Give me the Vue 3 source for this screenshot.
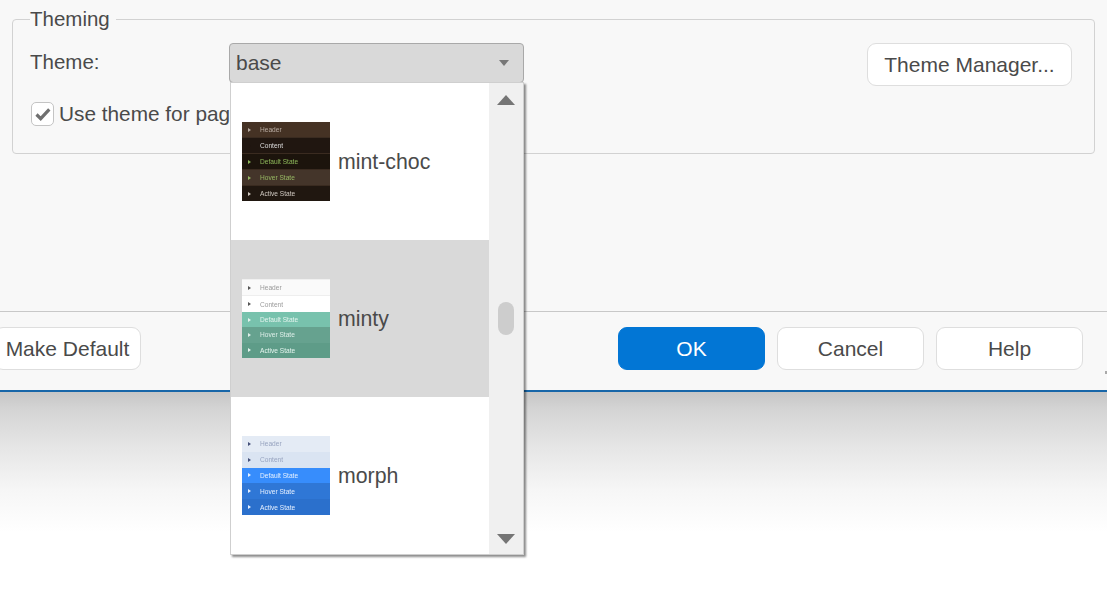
<script setup>
const states = [
  { label: 'Header', key: 'header' },
  { label: 'Content', key: 'content' },
  { label: 'Default State', key: 'default' },
  { label: 'Hover State', key: 'hover' },
  { label: 'Active State', key: 'active' },
]
const themes = [
  { name: 'mint-choc', cls: 'choc' },
  { name: 'minty', cls: 'minty', selected: true },
  { name: 'morph', cls: 'morph' },
]
</script>

<template>
  <div class="page">
    <section class="dialog">
      <div class="body">
        <fieldset class="group">
          <legend>Theming</legend>
          <div class="theme-row">
            <span class="theme-label">Theme:</span>
            <div class="select">
              <span>base</span>
              <svg class="caret" width="10" height="6" viewBox="0 0 10 6"><path d="M0 0h10L5 6z" fill="#777" /></svg>
            </div>
            <button class="btn manager" type="button">Theme Manager...</button>
          </div>
          <label class="check-row">
            <span class="checkbox">
              <svg width="18" height="16" viewBox="0 0 18 16"><path d="M2.5 8.5l4.2 4.2 8.6-9.4" fill="none" stroke="#6f6f6f" stroke-width="3.2" /></svg>
            </span>
            <span>Use theme for pages</span>
          </label>
        </fieldset>
      </div>
      <footer class="footer">
        <button class="btn make" type="button">Make Default</button>
        <div class="actions">
          <button class="btn primary" type="button">OK</button>
          <button class="btn" type="button">Cancel</button>
          <button class="btn" type="button">Help</button>
        </div>
      </footer>
      <i class="grip"></i>
    </section>
    <div class="fade"></div>

    <div class="dropdown">
      <ul class="list">
        <li v-for="t in themes" :key="t.name" class="item" :class="{ selected: t.selected }">
          <div class="thumb" :class="t.cls">
            <div v-for="s in states" :key="s.key" class="row" :class="s.key">
              <i class="tri"></i><span>{{ s.label }}</span>
            </div>
          </div>
          <span class="name">{{ t.name }}</span>
        </li>
      </ul>
      <div class="scrollbar">
        <svg width="18" height="10" viewBox="0 0 18 10"><path d="M9 0L18 10H0z" fill="#757575" /></svg>
        <div class="track"><div class="handle"></div></div>
        <svg width="18" height="10" viewBox="0 0 18 10"><path d="M0 0h18L9 10z" fill="#757575" /></svg>
      </div>
    </div>
  </div>
</template>

<style>
html, body { margin: 0; background: #fff; overflow: hidden; }
</style>

<style scoped>
.page {
  position: relative;
  width: 1107px;
  height: 596px;
  overflow: hidden;
  font-family: "Liberation Sans", Arial, sans-serif;
  font-size: 21px;
  color: #4a4a4a;
}
.dialog {
  position: relative;
  height: 392px;
  box-sizing: border-box;
  background: #f8f8f8;
  border-bottom: 2px solid #1766a8;
  display: flex;
  flex-direction: column;
}
.body { height: 311px; box-sizing: border-box; padding: 7px 12px 0; }
.group {
  box-sizing: border-box;
  width: 1083px;
  height: 147px;
  margin: 0;
  padding: 0 22px 0 17px;
  border: 1px solid #d2d2d2;
  border-radius: 4px;
}
legend { padding: 0 6px 0 0; font-size: 20.5px; line-height: 24px; }
.theme-row { display: flex; align-items: flex-start; margin-top: 12px; }
.theme-label { width: 199px; line-height: 38px; font-size: 20.5px; }
.select {
  box-sizing: border-box;
  width: 295px;
  height: 40px;
  border: 1px solid #a9a9a9;
  border-radius: 4px;
  background: #d9d9d9;
  display: flex;
  align-items: center;
  justify-content: space-between;
  padding: 0 14px 0 6px;
}
.btn {
  box-sizing: border-box;
  width: 147px;
  height: 43px;
  border: 1px solid #dedede;
  border-radius: 9px;
  background: #fff;
  padding: 0;
  font: inherit;
  color: inherit;
}
.manager { width: 205px; margin-left: auto; }
.check-row { display: flex; align-items: center; gap: 5px; margin-top: 15px; height: 26px; margin-left: 1px; font-size: 20.8px; }
.checkbox {
  box-sizing: border-box;
  width: 23px;
  height: 24px;
  border: 1px solid #c4c4c4;
  border-radius: 5px;
  background: #fff;
  display: flex;
  align-items: center;
  justify-content: center;
}
.footer {
  flex: 1;
  border-top: 1px solid #c8c8c8;
  display: flex;
  align-items: flex-start;
  justify-content: space-between;
  padding: 15px 24px 0 0;
  margin-left: -6px;
}
.actions { display: flex; gap: 12px; }
.primary { background: #0276d5; border-color: #0276d5; color: #fff; }
.grip { position: absolute; right: 0; top: 371px; width: 2px; height: 3px; background: #aaa; }
.fade { height: 140px; background: linear-gradient(#c6c6c6, #d4d4d4 12%, #e6e6e6 40%, #f6f6f6 70%, #ffffff); }
.dropdown {
  position: absolute;
  left: 230px;
  top: 82px;
  box-sizing: border-box;
  width: 294px;
  height: 473px;
  background: #fff;
  border: 1px solid #cfcfcf;
  box-shadow: 2px 2px 2px rgba(0, 0, 0, 0.45);
  display: flex;
}
.list { flex: 1; margin: 0; padding: 0; list-style: none; }
.item { height: 157px; display: flex; align-items: center; gap: 8px; padding-left: 11px; }
.item.selected { background: #d9d9d9; }
.name { font-size: 21.3px; padding-top: 2px; }
.thumb { width: 88px; height: 79px; display: flex; flex-direction: column; filter: blur(0.4px); }
.row {
  flex: 1;
  display: flex;
  align-items: center;
  font-size: 6.6px;
  padding-left: 6px;
  gap: 9px;
  white-space: nowrap;
}
.tri {
  width: 0;
  height: 0;
  border-left: 3px solid currentColor;
  border-top: 2px solid transparent;
  border-bottom: 2px solid transparent;
}
.choc .header { background: #453224; color: #b9ada3; }
.choc .content { background: #201610; color: #ddd; border-top: 1px solid #3a2b20; }
.choc .content .tri { color: #201610; }
.choc .default { background: #1c140c; color: #8db85a; border-top: 1px solid #3a2b20; }
.choc .hover { background: #44352a; color: #97b863; border-top: 1px solid #3a2b20; }
.choc .active { background: #201710; color: #cfc8c0; border-top: 1px solid #3a2b20; }
.minty .header { background: #fafafa; color: #9a9a9a; border-top: 1px solid #f0f0f0; }
.minty .content { background: #fff; color: #9a9a9a; border-top: 1px solid #eee; }
.minty .header .tri, .minty .content .tri { color: #555; }
.minty .default { background: #78c2ad; color: #e4f4ee; }
.minty .hover { background: #66a28f; color: #ddeee8; }
.minty .active { background: #5e9c88; color: #e4f4ee; }
.morph .header { background: #e4ebf5; color: #98a4c0; }
.morph .content { background: #dae4f2; color: #98a4c0; }
.morph .header .tri, .morph .content .tri { color: #44507a; }
.morph .default { background: #378dfc; color: #e4f0ff; }
.morph .hover { background: #2f77d6; color: #e6f0ff; }
.morph .active { background: #2b70cc; color: #e6f0ff; }
.scrollbar {
  width: 34px;
  background: #f0f0f0;
  display: flex;
  flex-direction: column;
  align-items: center;
  padding: 12px 0 10px;
  box-sizing: border-box;
}
.track { flex: 1; width: 100%; display: flex; justify-content: center; }
.handle { width: 16px; height: 33px; margin-top: 197px; border-radius: 8px; background: #cdcdcd; }
</style>
